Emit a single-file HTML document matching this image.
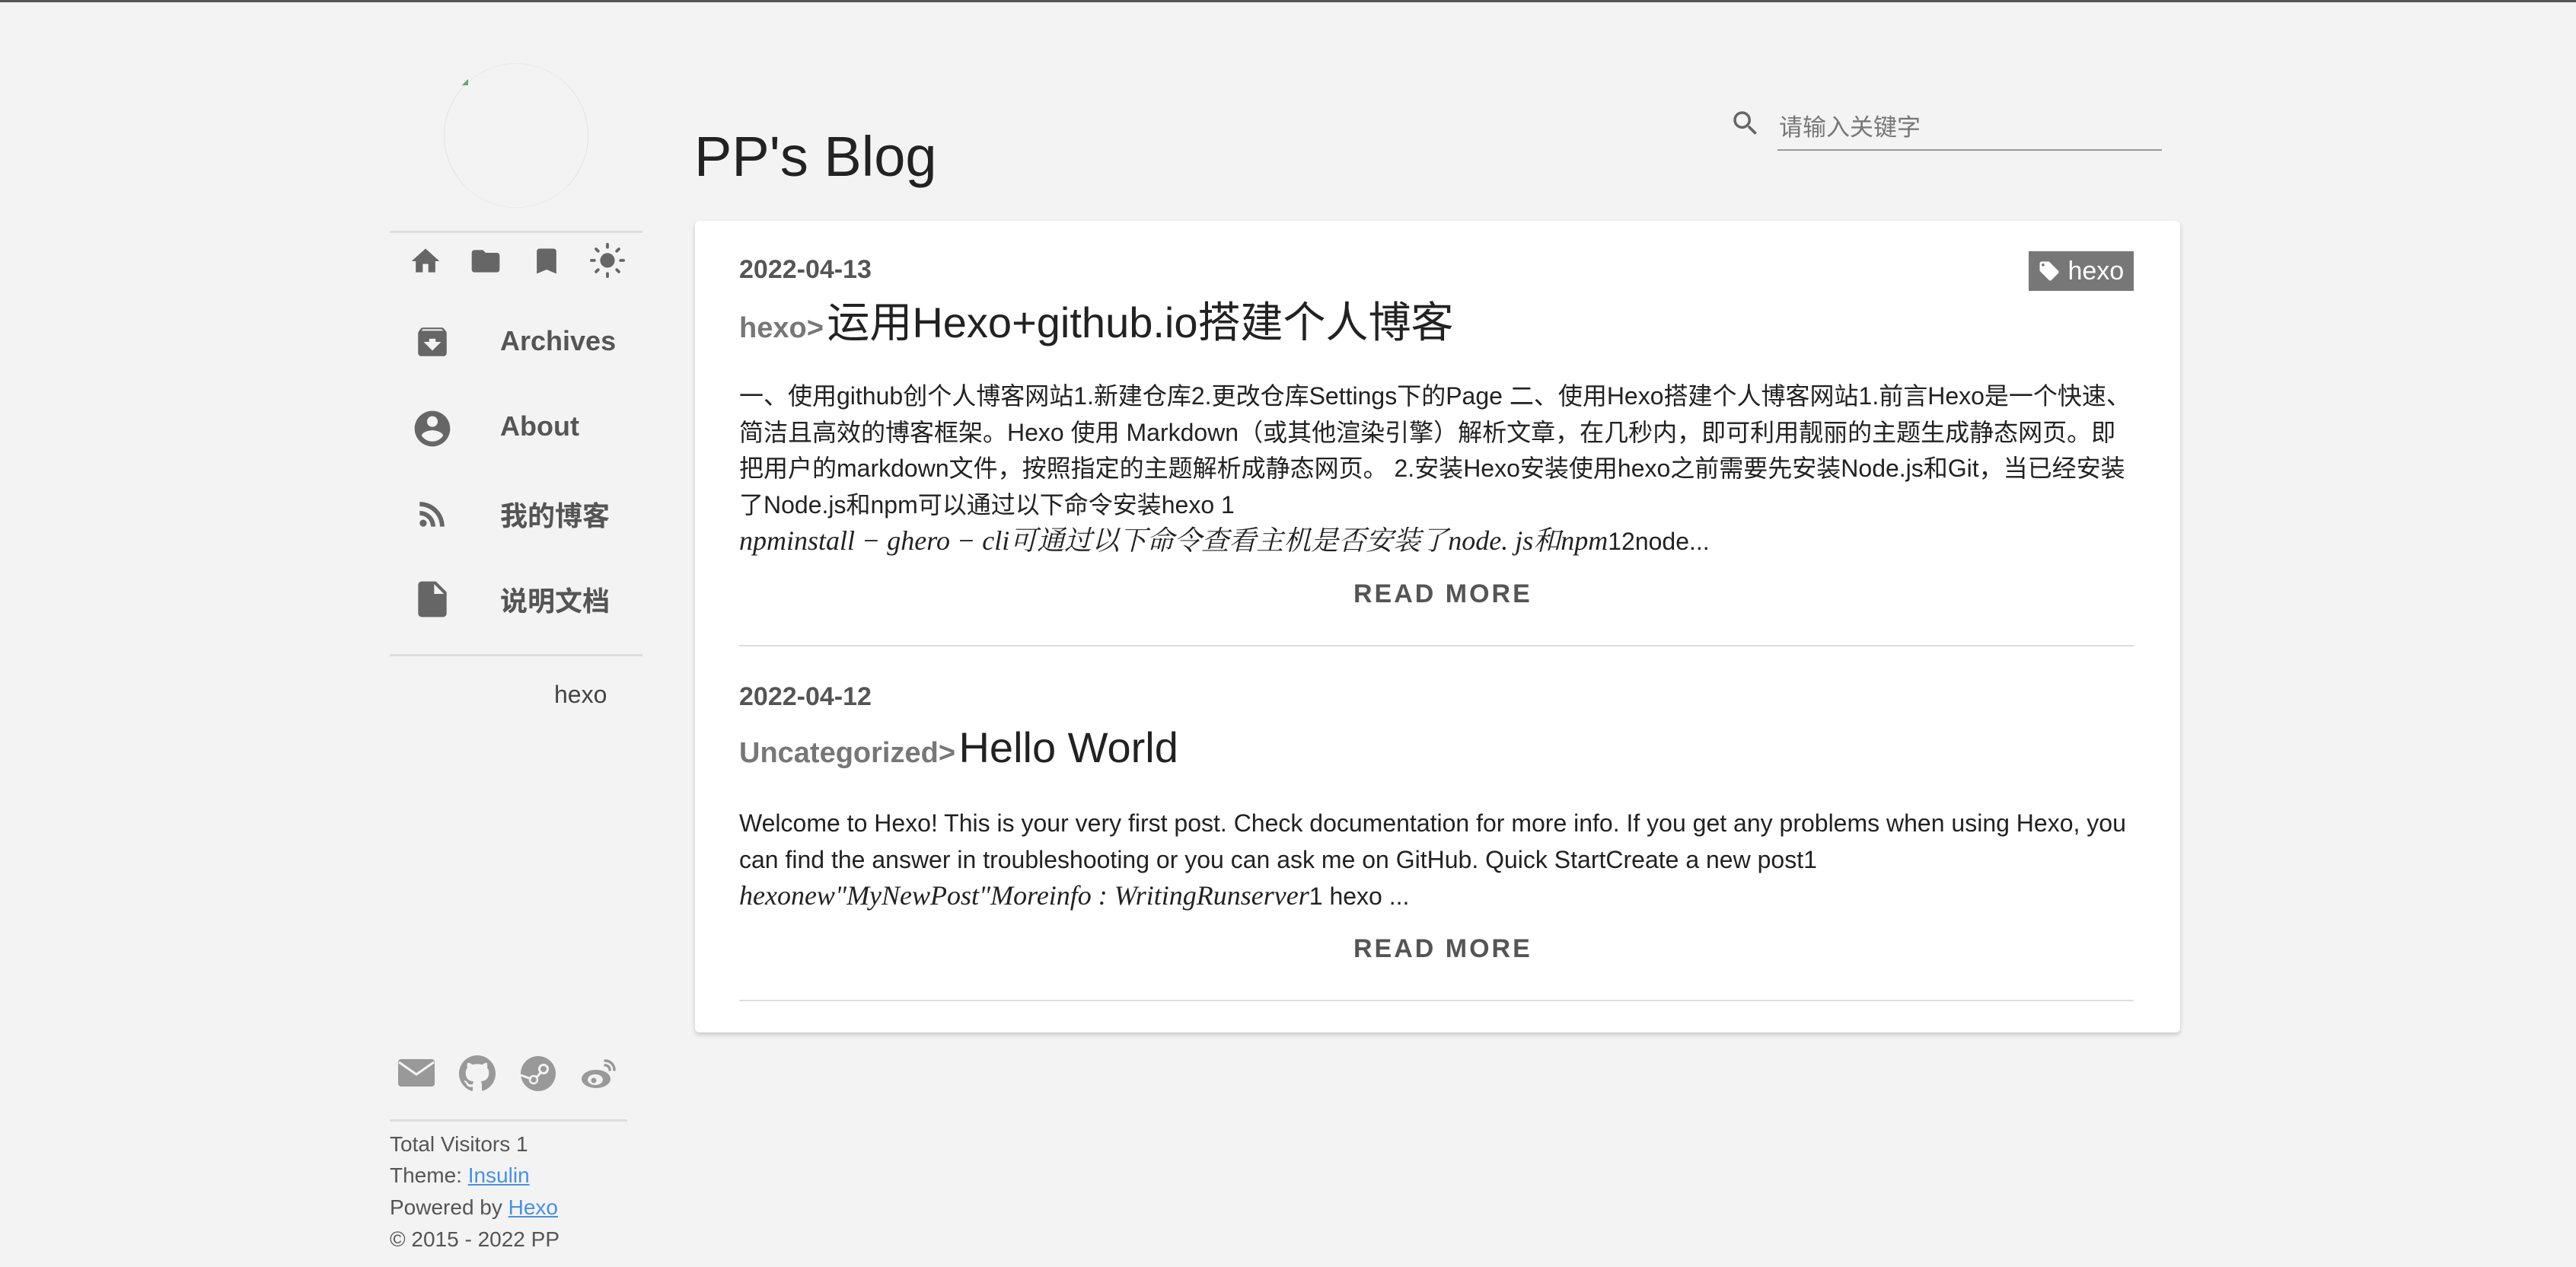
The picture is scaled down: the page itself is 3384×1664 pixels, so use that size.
<!DOCTYPE html>
<html><head><meta charset="utf-8"><style>
*{margin:0;padding:0;box-sizing:border-box}
html,body{width:3384px;height:1664px;overflow:hidden;background:#f3f3f3;font-family:"Liberation Sans","Noto Sans CJK SC",sans-serif;color:#333}
body{border-top:3px solid #555;position:relative}
.a{position:absolute;white-space:nowrap}
.line{position:absolute;height:3px;background:#ddd}
.nav{font-size:36px;font-weight:bold;color:#555}
.card{position:absolute;left:913px;top:287px;width:1951px;height:1066px;background:#fff;border-radius:6px;box-shadow:0 3px 6px rgba(0,0,0,.18)}
.date{font-size:34px;color:#555;font-weight:bold}
.cat{font-size:38px;color:#777;font-weight:bold}
.ttl{font-size:56px;color:#222}
.body{font-size:32px;line-height:47.5px;color:#222;width:1840px;white-space:normal}
.m{font-family:"Liberation Serif","Noto Serif CJK SC",serif;font-style:italic;font-size:36px}
.rm{font-size:34px;font-weight:bold;color:#555;letter-spacing:3px}
.ft{font-size:28px;color:#555}
.ft a{color:#4a90e2;text-decoration:underline}
</style></head><body>
<!-- avatar placeholder -->
<div class="a" style="left:583px;top:80px;width:190px;height:190px;border-radius:50%;border:1px solid transparent;border-top-color:#e6e6e6;border-bottom-color:#e6e6e6;border-left-color:#ddd;border-right-color:#ddd;opacity:.7"></div>
<div class="a" style="left:607px;top:101px;width:8px;height:8px;background:linear-gradient(135deg,transparent 50%,#6a6 50%)"></div>
<div class="line" style="left:512px;top:300px;width:332px"></div>
<!-- top icons -->
<svg class="a" style="left:537px;top:318px" width="44" height="44" viewBox="0 0 24 24" fill="#666"><path d="M10 20v-6h4v6h5v-8h3L12 3 2 12h3v8z"/></svg>
<svg class="a" style="left:616px;top:318px" width="44" height="44" viewBox="0 0 24 24" fill="#666"><path d="M10 4H4c-1.1 0-2 .9-2 2v12c0 1.1.9 2 2 2h16c1.1 0 2-.9 2-2V8c0-1.1-.9-2-2-2h-8l-2-2z"/></svg>
<svg class="a" style="left:696px;top:318px" width="44" height="44" viewBox="0 0 24 24" fill="#666"><path d="M17 3H7c-1.1 0-2 .9-2 2v16l7-3 7 3V5c0-1.1-.9-2-2-2z"/></svg>
<svg class="a" style="left:775px;top:316px" width="46" height="46" viewBox="0 0 24 24" fill="#666"><circle cx="12" cy="12" r="5"/><g stroke="#666" stroke-width="2" stroke-linecap="round"><path d="M12 1v2M12 21v2M1 12h2M21 12h2M4.2 4.2l1.4 1.4M18.4 18.4l1.4 1.4M4.2 19.8l1.4-1.4M18.4 5.6l1.4-1.4"/></g></svg>
<!-- nav -->
<svg class="a" style="left:543px;top:421px" width="50" height="50" viewBox="0 0 24 24" fill="#666"><path d="M20.5 5.2l-1.4-1.7C18.9 3.2 18.5 3 18 3H6c-.5 0-.9.2-1.2.5L3.5 5.2C3.2 5.6 3 6 3 6.5V19c0 1.1.9 2 2 2h14c1.1 0 2-.9 2-2V6.5c0-.5-.2-.9-.5-1.3zM12 17.5L6.5 12H10v-2h4v2h3.5L12 17.5zM5.1 5l.8-1h12l.9 1H5.1z"/></svg>
<div class="a nav" style="left:657px;top:424px">Archives</div>
<svg class="a" style="left:540px;top:532px" width="56" height="56" viewBox="0 0 24 24" fill="#666"><path d="M12 2C6.5 2 2 6.5 2 12s4.5 10 10 10 10-4.5 10-10S17.5 2 12 2zm0 3c1.7 0 3 1.3 3 3s-1.3 3-3 3-3-1.3-3-3 1.3-3 3-3zm0 14.2c-2.5 0-4.7-1.3-6-3.2 0-2 4-3.1 6-3.1s6 1.1 6 3.1c-1.3 1.9-3.5 3.2-6 3.2z"/></svg>
<div class="a nav" style="left:657px;top:536px">About</div>
<svg class="a" style="left:543px;top:647px" width="50" height="50" viewBox="0 0 24 24" fill="#666"><circle cx="6.2" cy="17.8" r="2.2"/><path d="M4 4.4v2.8c7 0 12.8 5.7 12.8 12.8h2.8C19.6 11.4 12.6 4.4 4 4.4zm0 5.7v2.8c3.9 0 7.1 3.2 7.1 7.1h2.8c0-5.5-4.4-9.9-9.9-9.9z"/></svg>
<div class="a nav" style="left:657px;top:646px">我的博客</div>
<svg class="a" style="left:540px;top:756px" width="56" height="56" viewBox="0 0 24 24" fill="#666"><path d="M6 2c-1.1 0-2 .9-2 2v16c0 1.1.9 2 2 2h12c1.1 0 2-.9 2-2V8l-6-6H6zm7 7V3.5L18.5 9H13z"/></svg>
<div class="a nav" style="left:657px;top:758px">说明文档</div>
<div class="line" style="left:512px;top:856px;width:332px"></div>
<div class="a" style="left:728px;top:891px;font-size:32px;color:#444">hexo</div>
<!-- social -->
<svg class="a" style="left:522px;top:1386px" width="50" height="40" viewBox="0 0 50 40"><rect x="1" y="2" width="48" height="36" rx="4" fill="#999"/><path d="M2 6l23 16 23-16" stroke="#f3f3f3" stroke-width="3" fill="none"/></svg>
<svg class="a" style="left:603px;top:1383px" width="48" height="48" viewBox="0 0 16 16" fill="#999"><path d="M8 0C3.6 0 0 3.6 0 8c0 3.5 2.3 6.5 5.5 7.6.4.1.5-.2.5-.4v-1.4c-2.2.5-2.7-1-2.7-1-.4-.9-.9-1.2-.9-1.2-.7-.5.1-.5.1-.5.8.1 1.2.8 1.2.8.7 1.2 1.9.9 2.3.7.1-.5.3-.9.5-1.1-1.8-.2-3.600-.9-3.6-4 0-.9.3-1.6.8-2.1-.1-.2-.4-1 .1-2.1 0 0 .7-.2 2.2.8.6-.2 1.3-.3 2-.3s1.4.1 2 .3c1.5-1 2.2-.8 2.2-.8.4 1.1.2 1.9.1 2.1.5.6.8 1.3.8 2.1 0 3.1-1.9 3.7-3.6 3.9.3.3.5.8.5 1.5v2.2c0 .2.1.5.6.4C13.7 14.5 16 11.5 16 8c0-4.4-3.6-8-8-8z"/></svg>
<svg class="a" style="left:683px;top:1383px" width="48" height="48" viewBox="0 0 48 48"><circle cx="24" cy="24" r="23" fill="#999"/><circle cx="31" cy="18" r="7" fill="#f3f3f3"/><circle cx="31" cy="18" r="4" fill="#999"/><circle cx="18" cy="32" r="5" fill="none" stroke="#f3f3f3" stroke-width="2.5"/><path d="M1 26l14 5M21 30l6-7" stroke="#f3f3f3" stroke-width="3"/></svg>
<svg class="a" style="left:762px;top:1386px" width="50" height="42" viewBox="0 0 50 42"><ellipse cx="21" cy="28" rx="19" ry="12" fill="#999"/><ellipse cx="20" cy="29" rx="10" ry="7" fill="#f3f3f3"/><circle cx="18" cy="30" r="3.5" fill="#999"/><path d="M33 4a12 12 0 0 1 12 12M33 10a6 6 0 0 1 6 6" stroke="#999" stroke-width="3.5" fill="none" stroke-linecap="round"/></svg>
<div class="line" style="left:512px;top:1467px;width:312px"></div>
<div class="a ft" style="left:512px;top:1484px">Total Visitors 1</div>
<div class="a ft" style="left:512px;top:1525px">Theme: <a>Insulin</a></div>
<div class="a ft" style="left:512px;top:1567px">Powered by <a>Hexo</a></div>
<div class="a ft" style="left:512px;top:1609px">© 2015 - 2022 PP</div>
<!-- header -->
<div class="a" style="left:912px;top:160px;font-size:74px;color:#222">PP's Blog</div>
<svg class="a" style="left:2272px;top:138px" width="42" height="42" viewBox="0 0 24 24" fill="#666"><path d="M15.5 14h-.8l-.3-.3c1-1.1 1.6-2.6 1.6-4.2C16 5.9 13.1 3 9.5 3S3 5.9 3 9.5 5.9 16 9.5 16c1.6 0 3.1-.6 4.2-1.6l.3.3v.8l5 5 1.5-1.5-5-5zm-6 0C7 14 5 12 5 9.5S7 5 9.5 5 14 7 14 9.5 12 14 9.5 14z"/></svg>
<div class="a" style="left:2337px;top:139px;font-size:31px;color:#777">请输入关键字</div>
<div class="a" style="left:2335px;top:193px;width:505px;height:2px;background:#999"></div>
<!-- card -->
<div class="card"></div>
<div class="a date" style="left:971px;top:332px">2022-04-13</div>
<div class="a" style="left:2665px;top:327px;width:138px;height:52px;background:#777;color:#fff;font-size:34px;line-height:52px;padding-left:12px"><svg width="30" height="30" viewBox="0 0 24 24" fill="#fff" style="vertical-align:-4px"><path d="M21.4 11.6l-9-9C12.1 2.2 11.6 2 11 2H4c-1.1 0-2 .9-2 2v7c0 .6.2 1.1.6 1.4l9 9c.4.4.9.6 1.4.6s1-.2 1.4-.6l7-7c.4-.4.6-.9.6-1.4s-.2-1.1-.6-1.4zM5.5 7C4.7 7 4 6.3 4 5.5S4.7 4 5.5 4 7 4.7 7 5.5 6.3 7 5.5 7z"/></svg> hexo</div>
<div class="a" style="left:971px;top:376px"><span class="cat">hexo&gt;</span> <span class="ttl">运用Hexo+github.io搭建个人博客</span></div>
<div class="a body" style="left:971px;top:494px">一、使用github创个人博客网站1.新建仓库2.更改仓库Settings下的Page 二、使用Hexo搭建个人博客网站1.前言Hexo是一个快速、简洁且高效的博客框架。Hexo 使用 Markdown（或其他渲染引擎）解析文章，在几秒内，即可利用靓丽的主题生成静态网页。即把用户的markdown文件，按照指定的主题解析成静态网页。 2.安装Hexo安装使用hexo之前需要先安装Node.js和Git，当已经安装了Node.js和npm可以通过以下命令安装hexo 1<br><span class="m">npminstall − ghero − cli可通过以下命令查看主机是否安装了node. js和npm</span>12node...</div>
<div class="a rm" style="left:1778px;top:758px">READ MORE</div>
<div class="line" style="left:971px;top:844px;width:1832px;height:2px"></div>
<div class="a date" style="left:971px;top:893px">2022-04-12</div>
<div class="a" style="left:971px;top:946px"><span class="cat">Uncategorized&gt;</span> <span class="ttl">Hello World</span></div>
<div class="a body" style="left:971px;top:1055px">Welcome to Hexo! This is your very first post. Check documentation for more info. If you get any problems when using Hexo, you can find the answer in troubleshooting or you can ask me on GitHub. Quick StartCreate a new post1<br><span class="m">hexonew"MyNewPost"Moreinfo : WritingRunserver</span>1 hexo ...</div>
<div class="a rm" style="left:1778px;top:1224px">READ MORE</div>
<div class="line" style="left:971px;top:1310px;width:1832px;height:2px"></div>
</body></html>
